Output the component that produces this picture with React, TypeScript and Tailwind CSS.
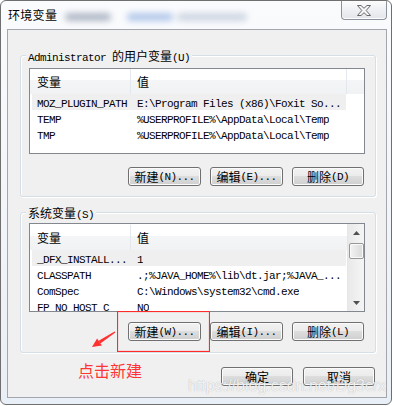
import React from "react";

const CJK = /([\u2E80-\u9FFF\uFF00-\uFFEF]+)/;

function T({ s }: { s: string }) {
  return (
    <>
      {s
        .split(CJK)
        .filter((p) => p.length > 0)
        .map((p, i) =>
          CJK.test(p) ? (
            <span key={i} className="font-['Noto_Sans_CJK_SC',sans-serif] text-[12px] tracking-normal">
              {p}
            </span>
          ) : (
            <span key={i} className="font-['Liberation_Mono',monospace] text-[11px] tracking-[-0.6px] whitespace-pre">
              {p}
            </span>
          )
        )}
    </>
  );
}

function Btn({ label, w = "w-[72px]" }: { label: string; w?: string }) {
  return (
    <div
      className={`${w} h-[19px] rounded-[3px] border border-[#707070] bg-[linear-gradient(#f2f2f2,#ebebeb_50%,#dddddd_50%,#cfcfcf)] shadow-[inset_0_0_0_1px_#fbfbfb] flex items-center justify-center leading-[14px] text-black`}
    >
      <T s={label} />
    </div>
  );
}

function GroupBox({
  legend,
  h,
  children,
}: {
  legend: string;
  h: string;
  children: React.ReactNode;
}) {
  return (
    <div
      className={`relative w-[356px] ${h} rounded-[3px] border border-[#d5dfe5] shadow-[inset_1px_1px_0_#fff,1px_1px_0_#fff] flex flex-col`}
    >
      <div className="absolute -top-[8px] left-[5px] px-[2px] bg-[#f0f0f0] leading-[14px] text-black">
        <T s={legend} />
      </div>
      {children}
    </div>
  );
}

function Header({ second = true }: { second?: boolean }) {
  return (
    <div className="flex h-[25px] shrink-0 bg-[linear-gradient(#ffffff,#ffffff_45%,#f4f5f7_45%,#f1f2f4)] text-black">
      <div className="w-[101px] border-r border-[#e3e8ee] pl-[7px] flex items-center leading-[14px]">
        <T s="变量" />
      </div>
      <div
        className={`${second ? "w-[216px] border-r border-[#e3e8ee]" : "flex-1"} pl-[6px] flex items-center leading-[14px]`}
      >
        <T s="值" />
      </div>
    </div>
  );
}

function Row({ a, b, sel = false }: { a: string; b: string; sel?: boolean }) {
  return (
    <div
      className={`ml-[2px] w-[314px] h-[16px] shrink-0 flex items-center leading-[14px] text-black ${
        sel ? "bg-[#efefef]" : ""
      }`}
    >
      <div className="w-[98px] pl-[5px] whitespace-nowrap overflow-hidden">
        <T s={a} />
      </div>
      <div className="pl-[7px] whitespace-nowrap overflow-hidden">
        <T s={b} />
      </div>
    </div>
  );
}

function ScrollBar() {
  return (
    <div className="w-[17px] h-full shrink-0 border-l border-[#e6e6e6] bg-[linear-gradient(90deg,#e9e9e9,#f5f5f5)] flex flex-col items-center">
      <div className="h-[17px] w-full flex items-center justify-center">
        <svg width="7" height="4" viewBox="0 0 7 4">
          <polygon points="3.5,0 7,4 0,4" fill="#505050" />
        </svg>
      </div>
      <div className="mt-[2px] w-[15px] h-[16px] rounded-[2px] border border-[#979797] bg-[linear-gradient(90deg,#f3f3f3,#e6e6e6_50%,#d9d9d9)] shadow-[inset_0_0_0_1px_#fafafa]" />
      <div className="flex-1" />
      <div className="h-[17px] w-full flex items-center justify-center">
        <svg width="7" height="4" viewBox="0 0 7 4">
          <polygon points="0,0 7,0 3.5,4" fill="#505050" />
        </svg>
      </div>
    </div>
  );
}

export default function App() {
  return (
    <div className="relative w-[394px] h-[406px] overflow-hidden bg-white">
      <div className="relative w-[392px] h-[405px] rounded-[6px] border border-[#6f6f6f] bg-[linear-gradient(#fafbfd,#f1f4f8_60%,#e9eff6)] flex flex-col overflow-hidden">
        {/* title bar */}
        <div className="h-[28px] shrink-0 flex items-start">
          <div className="ml-[7px] mt-[7px] leading-[14px] text-black font-['Noto_Sans_CJK_SC',sans-serif] text-[12px] tracking-[0.3px] [text-shadow:0_0_5px_#fff,0_0_8px_#fff]">
            环境变量
          </div>
          <div className="ml-[8px] mt-[12px] w-[46px] h-[8px] rounded-full bg-[#5a6a86] opacity-45 blur-[3px]" />
          <div className="ml-[16px] mt-[12px] w-[46px] h-[8px] rounded-full bg-[#4a7fd0] opacity-40 blur-[3px]" />
          <div className="ml-[4px] mt-[12px] w-[70px] h-[8px] rounded-full bg-[#8195b3] opacity-35 blur-[3px]" />
          <div className="ml-auto mr-[4px] w-[46px] h-[19px] rounded-b-[4px] border border-t-0 border-[#8c929b] bg-[linear-gradient(#fdfdfd,#eef0f3_50%,#e3e6ea)] shadow-[inset_0_-1px_0_#fff] flex items-center justify-center">
            <svg width="14" height="11" viewBox="0 0 14 11">
              <polygon
                points="0.5,0.5 4,0.5 7,3.3 10,0.5 13.5,0.5 9.2,5.5 13.5,10.5 10,10.5 7,7.7 4,10.5 0.5,10.5 4.8,5.5"
                fill="#f6f6f6"
                stroke="#6a6a6a"
                strokeWidth="1"
                strokeLinejoin="round"
              />
            </svg>
          </div>
        </div>

        {/* client area */}
        <div className="ml-[6px] w-[380px] h-[369px] shrink-0 border border-[#a3a7ad] bg-[#f0f0f0] flex flex-col">
          <div className="ml-[12px] mt-[25px]">
            <GroupBox legend="Administrator 的用户变量(U)" h="h-[142px]">
              <div className="ml-[8px] mt-[12px] w-[336px] h-[86px] border border-[#828790] bg-white flex flex-col overflow-hidden">
                <Header />
                <Row sel a="MOZ_PLUGIN_PATH" b="E:\Program Files (x86)\Foxit So..." />
                <Row a="TEMP" b="%USERPROFILE%\AppData\Local\Temp" />
                <Row a="TMP" b="%USERPROFILE%\AppData\Local\Temp" />
              </div>
              <div className="mt-[13px] mr-[11px] flex justify-end gap-[9px]">
                <Btn label="新建(N)..." w="w-[73px]" />
                <Btn label="编辑(E)..." w="w-[73px]" />
                <Btn label="删除(D)" />
              </div>
            </GroupBox>
          </div>

          <div className="ml-[12px] mt-[15px]">
            <GroupBox legend="系统变量(S)" h="h-[141px]">
              <div className="ml-[8px] mt-[10px] w-[336px] h-[89px] border border-[#828790] bg-white flex overflow-hidden">
                <div className="flex-1 flex flex-col overflow-hidden">
                  <div className="h-[1px] shrink-0" />
                  <Header second={false} />
                  <Row sel a="_DFX_INSTALL..." b="1" />
                  <Row a="CLASSPATH" b=".;%JAVA_HOME%\lib\dt.jar;%JAVA_..." />
                  <Row a="ComSpec" b="C:\Windows\system32\cmd.exe" />
                  <Row a="FP_NO_HOST_C" b="NO" />
                </div>
                <ScrollBar />
              </div>
              <div className="mt-[10px] mr-[11px] flex justify-end gap-[9px]">
                <Btn label="新建(W)..." w="w-[73px]" />
                <Btn label="编辑(I)..." w="w-[73px]" />
                <Btn label="删除(L)" />
              </div>
            </GroupBox>
          </div>

          <div className="mt-[14px] h-[19px] flex items-center">
            <span className="ml-[70px] -translate-y-[7px] font-['Noto_Sans_CJK_SC',sans-serif] text-[16px] leading-[20px] text-[#ff3535]">
              点击新建
            </span>
            <div className="ml-auto mr-[11px] flex gap-[10px]">
              <Btn label="确定" />
              <Btn label="取消" />
            </div>
          </div>
        </div>
      </div>

      {/* annotation overlays */}
      <svg className="absolute left-[117px] top-[311px]" width="93" height="41" viewBox="0 0 93 41">
        <rect x="0.5" y="0.5" width="92" height="40" fill="none" stroke="#ff2a2a" strokeWidth="1.2" />
      </svg>
      <svg className="absolute left-[85px] top-[325px]" width="35" height="28" viewBox="0 0 35 28">
        <polygon points="30.4,7.4 29.6,6.6 13.7,15.8 15.3,18.4" fill="#ff3030" />
        <polygon points="7,22 16.9,20.6 12.1,13.6" fill="#ff3030" />
      </svg>
      <div className="absolute left-[188px] top-[377px] font-['Liberation_Sans',Arial,sans-serif] text-[16px] leading-[18px] text-[rgba(255,255,255,0.85)] [text-shadow:0_0_1px_rgba(0,0,0,0.3)] whitespace-nowrap">
        https://blog.csdn.net/Dg3crx
      </div>
    </div>
  );
}
